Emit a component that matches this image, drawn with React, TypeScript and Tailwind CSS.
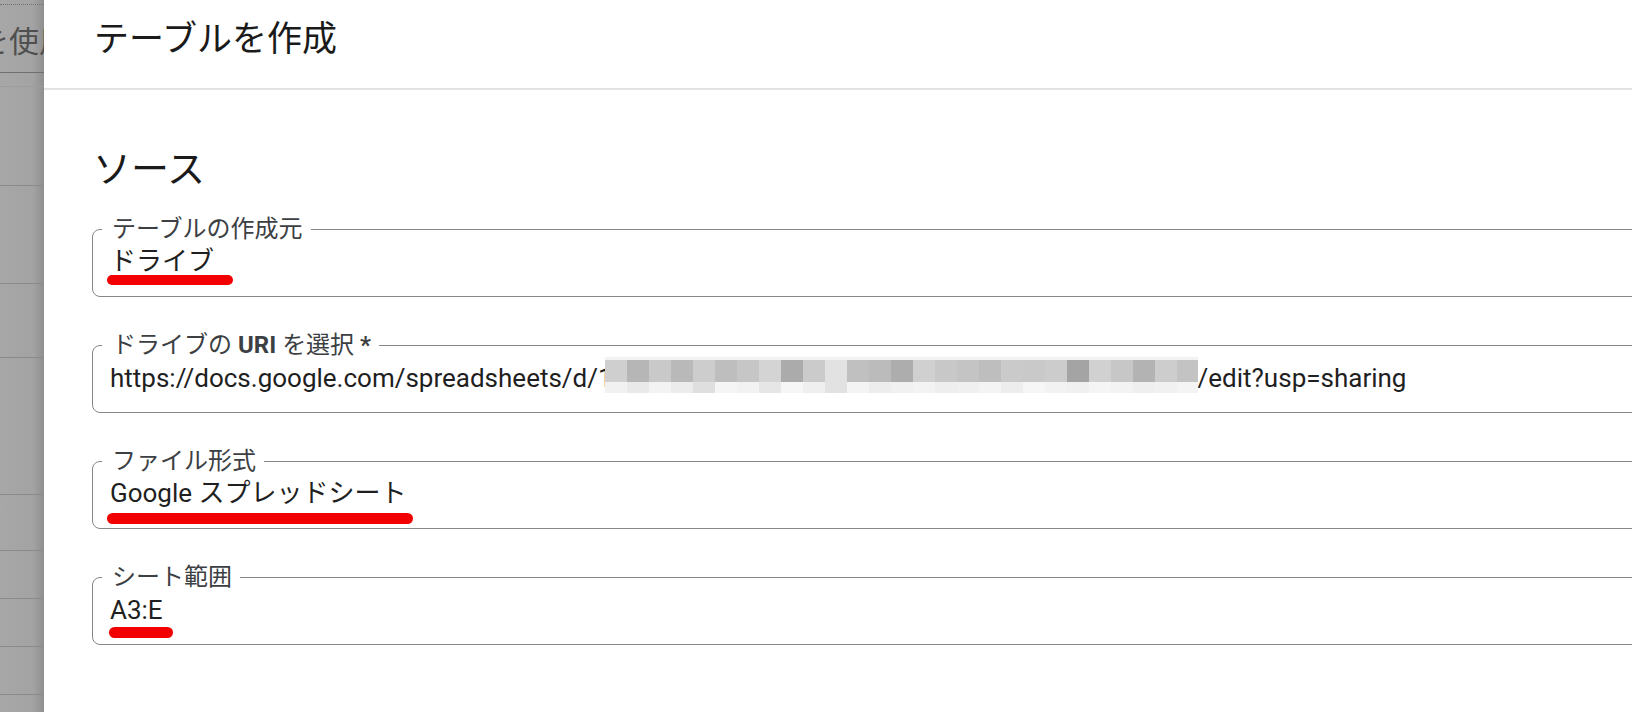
import React from "react";

const stripRows = [
  "h-[5px] border-b-[1.5px] border-dotted border-[#727272]",
  "h-[68px] border-b-[1.5px] border-[#6f6f6f]",
  "h-[14px] border-b border-[#9d9d9d]",
  "h-[99px] border-b-[1.5px] border-[#8a8a8a]",
  "h-[98px] border-b-[1.5px] border-[#8a8a8a]",
  "h-[74px] border-b-[1.5px] border-[#8a8a8a]",
  "h-[137px] border-b-[1.5px] border-[#8a8a8a]",
  "h-[56px] border-b-[1.5px] border-[#8a8a8a]",
  "h-[48px] border-b-[1.5px] border-[#8a8a8a]",
  "h-[48px] border-b-[1.5px] border-[#8a8a8a]",
  "h-[48px] border-b-[1.5px] border-[#8a8a8a]",
  "flex-1",
];

const mosaicTop = [
  "#cfcfcf", "#b6b6b6", "#c9c9c9", "#b9b9b9", "#cdcdcd", "#bebebe", "#c6c6c6", "#d4d4d4", "#ababab",
  "#cbcbcb", "#e2e2e2", "#c0c0c0", "#bbbbbb", "#adadad", "#d0d0d0", "#c8c8c8", "#c4c4c4", "#bebebe",
  "#cacaca", "#c9c9c9", "#cccccc", "#a4a4a4", "#d1d1d1", "#c7c7c7", "#b3b3b3", "#cdcdcd", "#c3c3c3",
];

const mosaicBottom = [
  "#f1f1f1", "#e9e9e9", "#f3f3f3", "#ececec", "#dfdfdf", "#f5f5f5", "#f2f2f2", "#e6e6e6", "#f6f6f6",
  "#efefef", "#e2e2e2", "#f4f4f4", "#ededed", "#f1f1f1", "#f3f3f3", "#eeeeee", "#f0f0f0", "#f4f4f4",
  "#ededed", "#f6f6f6", "#f2f2f2", "#f0f0f0", "#f5f5f5", "#f3f3f3", "#efefef", "#f1f1f1", "#f4f4f4",
];

function Mosaic() {
  return (
    <svg className="absolute -left-[8px] -bottom-[6px]" width={593} height={36} viewBox="0 0 593 36">
      <rect x={0} y={0} width={593} height={3} fill="#f2f2f2" />
      {mosaicTop.map((c, i) => (
        <rect key={`t${i}`} x={i * 22} y={3} width={22} height={22} fill={c} />
      ))}
      {mosaicBottom.map((c, i) => (
        <rect key={`b${i}`} x={i * 22} y={25} width={22} height={11} fill={c} />
      ))}
    </svg>
  );
}

function Field({
  label,
  children,
  latin = false,
  mark,
}: {
  label: React.ReactNode;
  children: React.ReactNode;
  latin?: boolean;
  mark?: string;
}) {
  return (
    <div className="relative -mr-10">
      <fieldset className="h-[82px] rounded-[8px] border-[1.5px] border-[#84878b] px-[9px]">
        <legend className="pl-[10px] pr-[8px] text-[24px] leading-[28px] text-[#3c4043]">{label}</legend>
        <div
          className={
            latin
              ? "px-[8px] pt-[4px] text-[26px] leading-[30px] text-[#1f1f1f] whitespace-nowrap"
              : "px-[8px] pt-[3px] text-[26px] leading-[30px] text-[#1f1f1f] whitespace-nowrap"
          }
        >
          {children}
        </div>
      </fieldset>
      {/* red annotation underline */}
      {mark && <div className={mark} />}
    </div>
  );
}

export default function App() {
  return (
    <div className="flex h-[712px] w-full overflow-hidden bg-white font-['Roboto','Noto_Sans_CJK_JP',sans-serif]">
      {/* dimmed page behind the dialog */}
      <div className="flex w-[44px] shrink-0 flex-col overflow-hidden bg-linear-to-r from-[#a7a7a7] via-[#a3a3a3] via-75% to-[#8f8f8f]">
        {stripRows.map((cls, i) => (
          <div key={i} className={cls + " flex items-center"}>
            {i === 1 && (
              <span className="-ml-[21px] whitespace-nowrap font-['Noto_Sans_CJK_JP',sans-serif] text-[30px] leading-[36px] text-[#4f4f4f]">
                を使用
              </span>
            )}
          </div>
        ))}
      </div>

      <div className="flex min-w-0 flex-1 flex-col overflow-hidden">
        <header className="h-[90px] shrink-0 border-b-2 border-[#e2e2e2] pl-[50px] pt-[15px]">
          <h1 className="font-['Noto_Sans_CJK_JP',sans-serif] text-[35px] leading-[42px] text-[#1a1a1a]">
            テーブルを作成
          </h1>
        </header>

        <div className="pl-[48px]">
          <h2 className="ml-[1px] mt-[53px] font-['Noto_Sans_CJK_JP',sans-serif] text-[38px] leading-[46px] text-[#1a1a1a]">
            ソース
          </h2>

          <div className="mt-[26px] flex flex-col gap-[34px]">
            <Field
              label="テーブルの作成元"
              mark="absolute left-[15px] top-[60px] h-[10px] w-[126px] rounded-full bg-[#f20000]"
            >
              ドライブ
            </Field>

            <Field
              latin
              label={
                <>
                  ドライブの <b className="font-bold">URI</b> を選択 <b className="font-bold">*</b>
                </>
              }
            >
              https://docs.google.com/spreadsheets/d/1
              <span className="relative inline-block h-0 w-[585px]">
                <Mosaic />
              </span>
              /edit?usp=sharing
            </Field>

            <Field
              label="ファイル形式"
              mark="absolute left-[15px] top-[66px] h-[11px] w-[306px] rounded-full bg-[#f20000]"
            >
              Google スプレッドシート
            </Field>

            <Field
              latin
              label="シート範囲"
              mark="absolute left-[17px] top-[64px] h-[11px] w-[64px] rounded-full bg-[#f20000]"
            >
              A3:E
            </Field>
          </div>
        </div>
      </div>
    </div>
  );
}
